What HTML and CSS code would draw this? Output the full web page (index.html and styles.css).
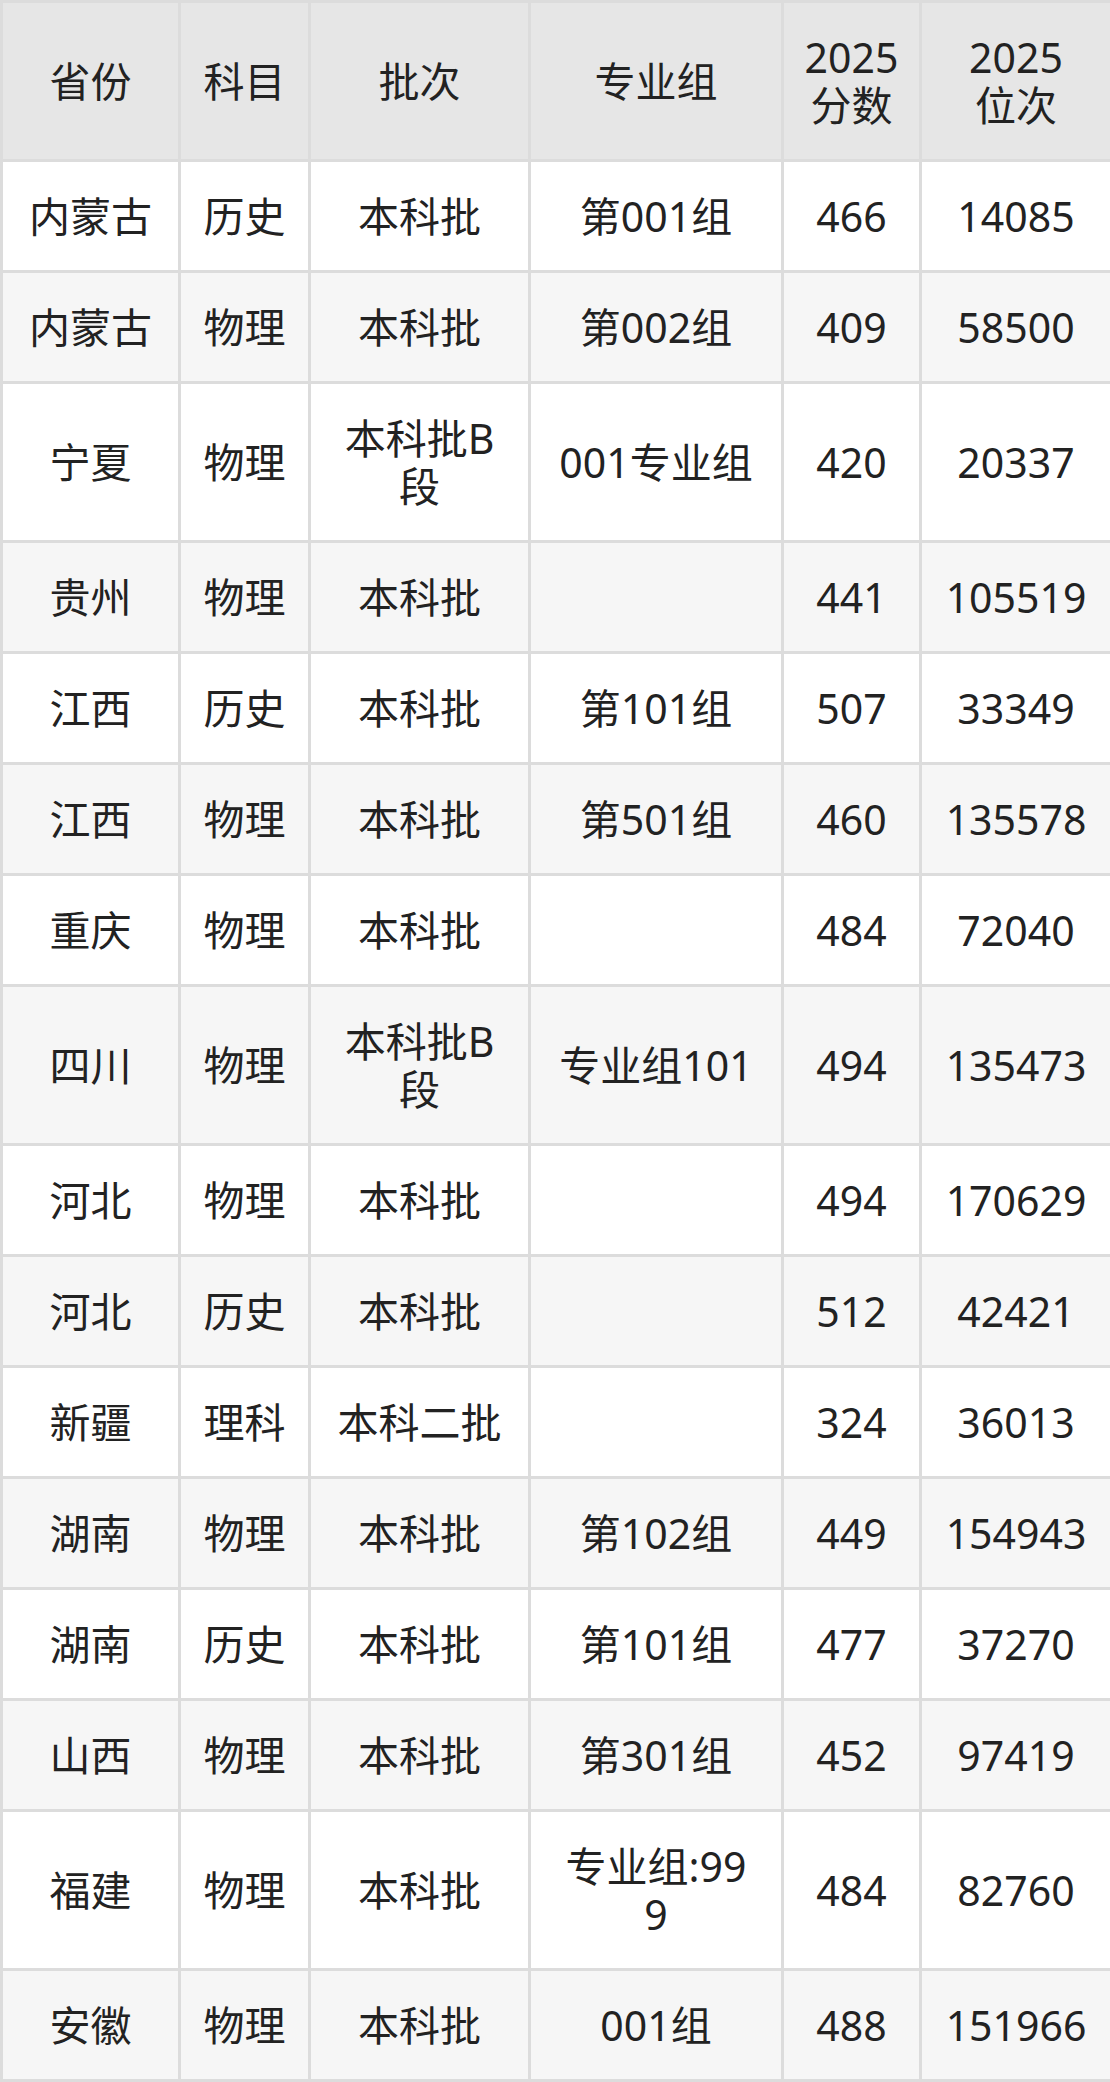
FILE: index.html
```html
<!DOCTYPE html>
<html lang="zh-CN">
<head>
<meta charset="utf-8">
<title>2025 分数位次</title>
<link rel="stylesheet" href="styles.css">
</head>
<body>
<table class="score-table">
  <colgroup>
    <col class="c-prov">
    <col class="c-subj">
    <col class="c-batch">
    <col class="c-group">
    <col class="c-score">
    <col class="c-rank">
  </colgroup>
  <thead>
    <tr>
      <th>省份</th>
      <th>科目</th>
      <th>批次</th>
      <th>专业组</th>
      <th class="th-score">2025分数</th>
      <th class="th-rank">2025位次</th>
    </tr>
  </thead>
  <tbody>
    <tr><td>内蒙古</td><td>历史</td><td>本科批</td><td class="td-group">第001组</td><td>466</td><td>14085</td></tr>
    <tr><td>内蒙古</td><td>物理</td><td>本科批</td><td class="td-group">第002组</td><td>409</td><td>58500</td></tr>
    <tr><td>宁夏</td><td>物理</td><td>本科批B段</td><td class="td-group">001专业组</td><td>420</td><td>20337</td></tr>
    <tr><td>贵州</td><td>物理</td><td>本科批</td><td class="td-group"></td><td>441</td><td>105519</td></tr>
    <tr><td>江西</td><td>历史</td><td>本科批</td><td class="td-group">第101组</td><td>507</td><td>33349</td></tr>
    <tr><td>江西</td><td>物理</td><td>本科批</td><td class="td-group">第501组</td><td>460</td><td>135578</td></tr>
    <tr><td>重庆</td><td>物理</td><td>本科批</td><td class="td-group"></td><td>484</td><td>72040</td></tr>
    <tr><td>四川</td><td>物理</td><td>本科批B段</td><td class="td-group">专业组101</td><td>494</td><td>135473</td></tr>
    <tr><td>河北</td><td>物理</td><td>本科批</td><td class="td-group"></td><td>494</td><td>170629</td></tr>
    <tr><td>河北</td><td>历史</td><td>本科批</td><td class="td-group"></td><td>512</td><td>42421</td></tr>
    <tr><td>新疆</td><td>理科</td><td>本科二批</td><td class="td-group"></td><td>324</td><td>36013</td></tr>
    <tr><td>湖南</td><td>物理</td><td>本科批</td><td class="td-group">第102组</td><td>449</td><td>154943</td></tr>
    <tr><td>湖南</td><td>历史</td><td>本科批</td><td class="td-group">第101组</td><td>477</td><td>37270</td></tr>
    <tr><td>山西</td><td>物理</td><td>本科批</td><td class="td-group">第301组</td><td>452</td><td>97419</td></tr>
    <tr><td>福建</td><td>物理</td><td>本科批</td><td class="td-group">专业组:999</td><td>484</td><td>82760</td></tr>
    <tr><td>安徽</td><td>物理</td><td>本科批</td><td class="td-group">001组</td><td>488</td><td>151966</td></tr>
  </tbody>
</table>
</body>
</html>
```
FILE: styles.css
```css
html, body {
  margin: 0;
  padding: 0;
  background: #ffffff;
}

.score-table {
  width: 1110px;
  table-layout: fixed;
  border-collapse: collapse;
  font-family: "Noto Sans", "Noto Sans CJK SC", sans-serif;
  font-size: 41px;
  line-height: 48px;
  color: #222222;
}

.c-prov { width: 178px; }
.c-subj { width: 130px; }
.c-batch { width: 220px; }
.c-group { width: 253px; }
.c-score { width: 138px; }
.c-rank { width: 191px; }

.score-table th,
.score-table td {
  border: 3px solid #dcdcdc;
  padding: 30px 20px;
  text-align: center;
  vertical-align: middle;
  font-weight: normal;
  word-break: break-all;
}

.score-table th {
  background: #e6e6e6;
}

.score-table .th-score {
  padding-left: 10px;
  padding-right: 10px;
}

.score-table .th-rank {
  padding-left: 36px;
  padding-right: 36px;
}

.score-table .td-group {
  padding-left: 26px;
  padding-right: 26px;
}

.score-table tbody tr:nth-child(even) td {
  background: #f6f6f6;
}
```
